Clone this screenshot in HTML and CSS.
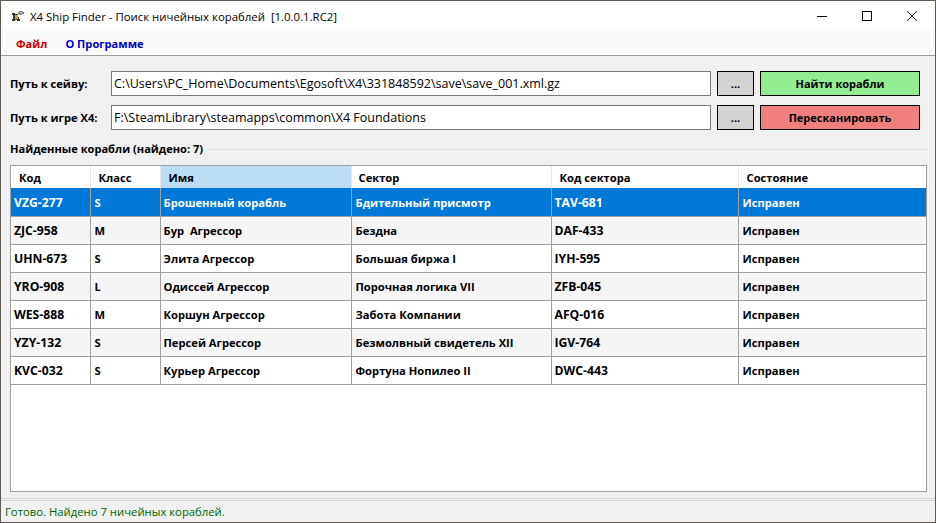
FILE: index.html
```html
<!DOCTYPE html>
<html lang="ru">
<head>
<meta charset="utf-8">
<title>X4 Ship Finder</title>
<link rel="stylesheet" href="styles.css">
</head>
<body>
<div class="window">
  <header class="titlebar">
    <svg class="appicon" width="16" height="16" viewBox="0 0 16 16"><path d="M2 5h3v1h3v3h1v2h1v2H7v-1H5v1H2v-2h1V7H2z" fill="#3d3626"/><path d="M5 7h3v4H5z" fill="#c9a83c"/><path d="M9 3h4v1h1v2h-2v1H9V6H8V4h1z" fill="#8d8b86"/><path d="M10 4h2v1h-2z" fill="#c4c3bf"/></svg>
    <span class="title">X4 Ship Finder - Поиск ничейных кораблей&nbsp; [1.0.0.1.RC2]</span>
    <div class="winbtns">
      <span class="winbtn"><svg width="12" height="12" viewBox="0 0 12 12"><path d="M1 6.5h10" stroke="#000" fill="none"/></svg></span>
      <span class="winbtn"><svg width="12" height="12" viewBox="0 0 12 12"><rect x="1.5" y="1.5" width="9" height="9" stroke="#000" fill="none"/></svg></span>
      <span class="winbtn"><svg width="12" height="12" viewBox="0 0 12 12"><path d="M1 1l10 10M11 1L1 11" stroke="#000" stroke-width="0.9" fill="none"/></svg></span>
    </div>
  </header>
  <nav class="menubar">
    <span class="menu-file">Файл</span>
    <span class="menu-about">О Программе</span>
  </nav>
  <main class="content">
    <div class="pathrow">
      <label class="pathlabel">Путь к сейву:</label>
      <div class="pathinput">C:\Users\PC_Home\Documents\Egosoft\X4\331848592\save\save_001.xml.gz</div>
      <button class="browse">...</button>
      <button class="action find">Найти корабли</button>
    </div>
    <div class="pathrow">
      <label class="pathlabel">Путь к игре X4:</label>
      <div class="pathinput">F:\SteamLibrary\steamapps\common\X4 Foundations</div>
      <button class="browse">...</button>
      <button class="action rescan">Пересканировать</button>
    </div>
    <div class="group">
      <span class="grouptitle">Найденные корабли (найдено: 7)</span>
    </div>
    <div class="listview">
      <table class="ships">
        <colgroup>
          <col class="c1"><col class="c2"><col class="c3"><col class="c4"><col class="c5"><col class="c6">
        </colgroup>
        <thead>
          <tr>
            <th class="h1">Код</th><th class="h2">Класс</th><th class="sorted h3">Имя</th><th class="h4">Сектор</th><th class="h5">Код сектора</th><th class="h6">Состояние</th>
          </tr>
        </thead>
        <tbody>
          <tr class="selected"><td>VZG-277</td><td>S</td><td>Брошенный корабль</td><td>Бдительный присмотр</td><td>TAV-681</td><td>Исправен</td></tr>
          <tr class="alt"><td>ZJC-958</td><td>M</td><td>Бур&nbsp; Агрессор</td><td>Бездна</td><td>DAF-433</td><td>Исправен</td></tr>
          <tr><td>UHN-673</td><td>S</td><td>Элита Агрессор</td><td>Большая биржа I</td><td>IYH-595</td><td>Исправен</td></tr>
          <tr class="alt"><td>YRO-908</td><td>L</td><td>Одиссей Агрессор</td><td>Порочная логика VII</td><td>ZFB-045</td><td>Исправен</td></tr>
          <tr><td>WES-888</td><td>M</td><td>Коршун Агрессор</td><td>Забота Компании</td><td>AFQ-016</td><td>Исправен</td></tr>
          <tr class="alt"><td>YZY-132</td><td>S</td><td>Персей Агрессор</td><td>Безмолвный свидетель XII</td><td>IGV-764</td><td>Исправен</td></tr>
          <tr><td>KVC-032</td><td>S</td><td>Курьер Агрессор</td><td>Фортуна Нопилео II</td><td>DWC-443</td><td>Исправен</td></tr>
        </tbody>
      </table>
    </div>
  </main>
  <footer class="statusbar">Готово. Найдено 7 ничейных кораблей.</footer>
</div>
</body>
</html>
```

FILE: styles.css
```css
* { box-sizing: border-box; }
html, body { margin: 0; padding: 0; }
body {
  width: 936px;
  height: 523px;
  overflow: hidden;
  font-family: "Open Sans", "Noto Sans", sans-serif;
  font-size: 12px;
  color: #000;
  background: #f0f0f0;
}
.window {
  width: 936px;
  height: 523px;
  display: flex;
  flex-direction: column;
  border: 1px solid #5f5a52;
  background: #f0f0f0;
}
.titlebar {
  height: 30px;
  flex: none;
  display: flex;
  align-items: center;
  background: #fff;
  padding-left: 9px;
}
.appicon { flex: none; }
.title {
  margin-left: 4px;
  font-size: 11.4px;
  white-space: nowrap;
}
.winbtns { margin-left: auto; display: flex; padding-right: 1px; }
.winbtn {
  width: 45px;
  height: 30px;
  display: flex;
  align-items: center;
  justify-content: center;
}
.menubar {
  height: 25px;
  flex: none;
  display: flex;
  align-items: center;
  gap: 18px;
  padding-left: 15px;
  background: #f9f9f9;
  border-bottom: 1px solid #a0a0a0;
  font-weight: 700;
  font-size: 11.1px;
}
.menu-file { color: #c80000; }
.menu-about { color: #0000c8; }
.content {
  flex: 1;
  display: flex;
  flex-direction: column;
  padding: 15px 7px 0 9px;
  min-height: 0;
}
.pathrow {
  display: flex;
  align-items: stretch;
  height: 25px;
  margin-bottom: 9px;
}
.pathlabel {
  width: 101px;
  flex: none;
  align-self: center;
  font-weight: 700;
  font-size: 11.2px;
  white-space: nowrap;
}
.pathinput {
  width: 600px;
  flex: none;
  background: #fff;
  border: 1px solid #7a7a7a;
  padding: 0 2px;
  line-height: 23px;
  font-size: 12.5px;
  white-space: nowrap;
  overflow: hidden;
}
.browse {
  width: 37px;
  flex: none;
  margin-left: 6px;
  background: #d3d3d3;
  border: 1px solid #000;
  font-family: inherit;
  font-weight: 700;
  font-size: 11px;
  padding: 0;
}
.action {
  width: 160px;
  flex: none;
  margin-left: 6px;
  border: 1px solid #000;
  font-family: inherit;
  font-weight: 700;
  font-size: 11px;
  padding: 0;
}
.find { background: #90ee90; }
.rescan { background: #f08080; }
.group {
  height: 18px;
  margin-top: 1px;
  display: flex;
  align-items: center;
  gap: 3px;
  font-weight: 700;
  font-size: 11.1px;
  white-space: nowrap;
}
.grouptitle { margin-bottom: 2px; }
.group::after {
  content: "";
  flex: 1;
  border-top: 1px solid #dcdcdc;
}
.listview {
  flex: none;
  height: 327px;
  margin-top: 7px;
  width: 917px;
  background: #fff;
  border: 1px solid #a0a0a0;
}
.ships {
  width: 915px;
  table-layout: fixed;
  border-collapse: collapse;
  font-size: 11.2px;
  font-weight: 700;
}
.c1 { width: 79px; }
.c2 { width: 70px; }
.c3 { width: 191px; }
.c4 { width: 200px; }
.c5 { width: 187px; }
.c6 { width: 188px; }
.ships th {
  height: 22px;
  text-align: left;
  padding: 0 0 0 8px;
  font-weight: 700;
  font-size: 11.2px;
  background: #fff;
  border-right: 1px solid #e5e5e5;
}
.ships th.sorted { background: #bcdcf4; }
.ships th.h4 { padding-left: 7px; }
.ships th.h6 { border-right: 0; }
.ships td {
  height: 28px;
  padding: 0 0 0 4px;
  border-right: 1px solid #a0a0a0;
  border-bottom: 1px solid #a0a0a0;
  white-space: nowrap;
  overflow: hidden;
}
.ships td:nth-child(1), .ships td:nth-child(3), .ships td:nth-child(5) { padding-left: 3px; }
.ships td:nth-child(1), .ships td:nth-child(5) { font-size: 12.2px; }
.ships tr.alt td { background: #f5f5f5; }
.ships tr.selected td { background: #0078d7; color: #fff; padding-top: 1px; }
.statusbar {
  flex: none;
  height: 24px;
  margin-top: auto;
  border-top: 3px double #d4d4d4;
  padding: 2px 0 0 4px;
  color: #006400;
  font-size: 11.3px;
  line-height: 18px;
}
```
